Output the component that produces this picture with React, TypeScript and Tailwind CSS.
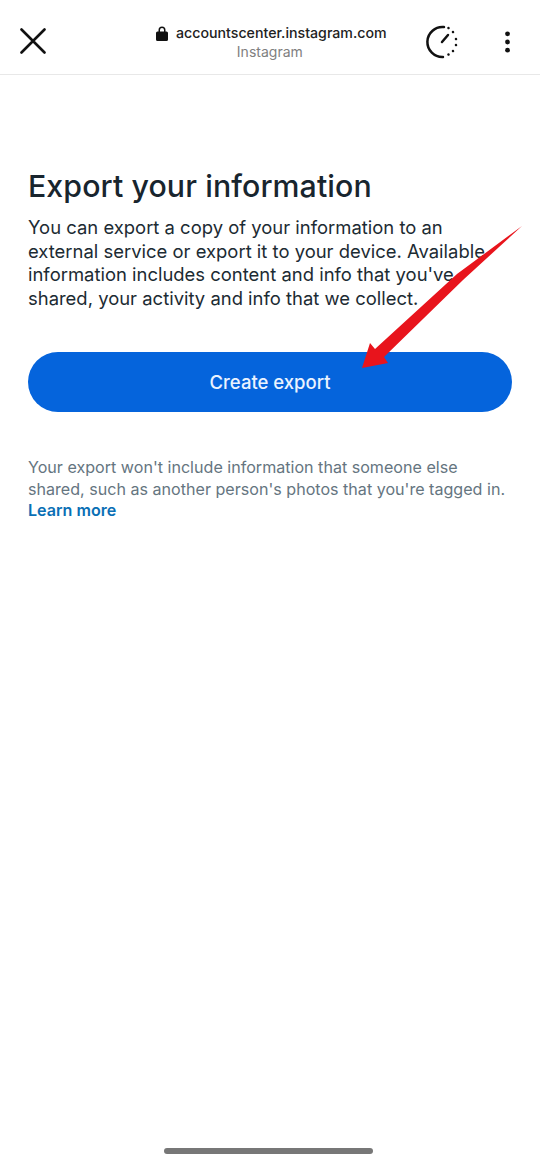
export default function App() {
  return (
    <div className="relative w-[540px] h-[1163px] bg-white overflow-hidden font-['Inter','Roboto',sans-serif] text-[#1c2b33]">
      <header className="h-[75px] border-b border-[#e8e8e8] flex items-center pl-5 pr-[30px] pt-[10px]">
        <svg className="mb-[2px]" width="26" height="26" viewBox="0 0 26 26" fill="none" stroke="#111" strokeWidth="2.600" strokeLinecap="round"><path d="M1.500 1.500 24.500 24.500M24.500 1.500 1.500 24.500" /></svg>
        <div className="flex flex-col items-center ml-[110px]">
          <div className="flex items-center gap-[8px] text-[14.200px] leading-5 text-[#222] font-medium translate-y-px">
            <svg width="12" height="15" viewBox="0 0 12 15" fill="#111"><path d="M1.500 5.500h1V4a3.500 3.500 0 0 1 7 0v1.500h1A1.500 1.500 0 0 1 12 7v6.500A1.500 1.500 0 0 1 10.500 15h-9A1.500 1.500 0 0 1 0 13.500V7a1.500 1.500 0 0 1 1.500-1.500ZM4 5.500h4V4a2 2 0 0 0-4 0Z" /></svg>
            accountscenter.instagram.com
          </div>
          <div className="text-[14px] leading-5 text-[#808080] mr-[3px]">Instagram</div>
        </div>
        <div className="flex items-center gap-[46px] ml-auto mb-[1px]">
          <svg width="34" height="34" viewBox="0 0 34 34" fill="none" stroke="#111" strokeWidth="2.500" strokeLinecap="round"><path d="M19 2.100A15 15 0 1 0 18 32" /><path d="M17 17l6-7" /><path d="M23.500 3l.01.01M28 7l.01.01M31 14l.01.01M31 20l.01.01M28 26l.01.01M23.500 29.500l.01.01" /></svg>
          <svg width="5" height="22" viewBox="0 0 5 22" fill="#111"><circle cx="2.500" cy="2.800" r="2.400" /><circle cx="2.500" cy="11" r="2.400" /><circle cx="2.500" cy="19.200" r="2.400" /></svg>
        </div>
      </header>
      <main className="px-7 pt-[93px]">
        <h1 className="text-[30.300px] leading-9 font-medium tracking-[0.1px] text-[#18252e]">Export your information</h1>
        <p className="mt-[12px] w-[470px] text-[18.450px] leading-[23.500px] text-[#1c2b33]">You can export a copy of your information to an external service or export it to your device. Available information includes content and info that you've shared, your activity and info that we collect.</p>
        <button className="mt-[42px] w-[484px] h-[60px] pt-px rounded-full bg-[#0564dc] text-[#eaf3ff] text-[18.500px] font-medium">Create export</button>
        <p className="mt-[45px] text-[16.100px] leading-[21.500px] text-[#65757f]">Your export won't include information that someone else shared, such as another person's photos that you're tagged in.</p>
        <a className="block text-[16.100px] leading-[21.500px] font-semibold text-[#0a6fb5]">Learn more</a>
      </main>
      <div className="absolute left-[164px] top-[1148px] w-[209px] h-[6px] rounded-full bg-[#777]" />
      <svg className="absolute left-[355px] top-[220px]" width="175" height="155" viewBox="0 0 175 155"><path d="M167 6 102 54 20 129 15 123 7 148 33 143 29 137 108 60Z" fill="#e8141c" /></svg>
    </div>
  );
}
